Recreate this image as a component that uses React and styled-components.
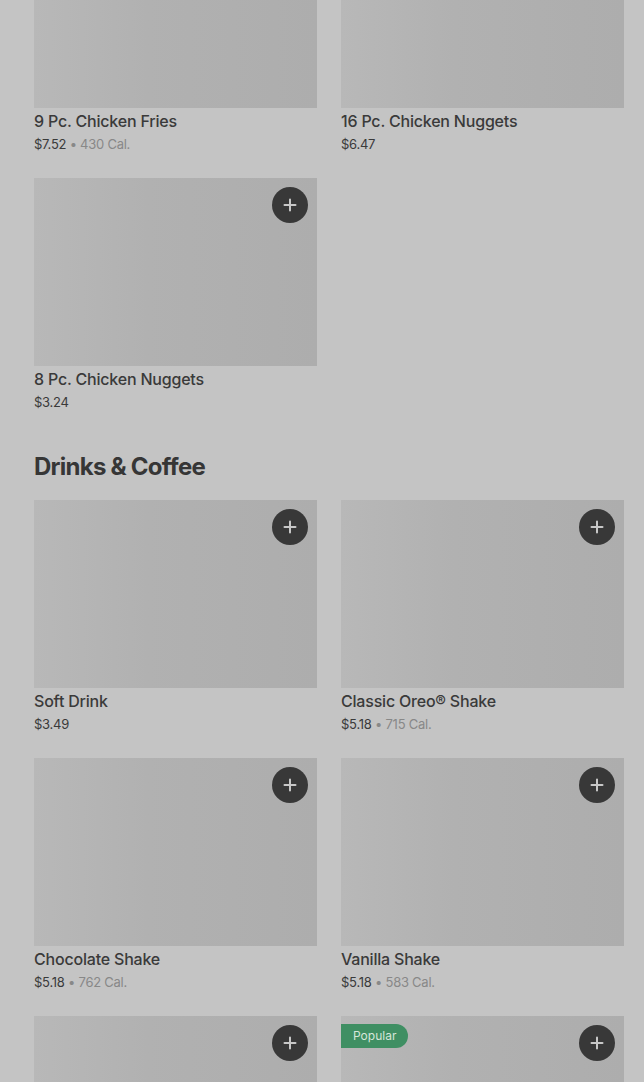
import React from "react";
import styled, { createGlobalStyle } from "styled-components";

const Global = createGlobalStyle`
  html, body { margin: 0; padding: 0; background: #c4c4c4; overflow: hidden; }
  body { font-family: Inter, "Noto Sans", Roboto, sans-serif; color: #3a3a3a; }
`;

const Page = styled.div`
  padding: 0 20px 0 34px;
  margin-top: -80px;
`;

const Section = styled.section`
  & + & { margin-top: 39px; }
`;

const Heading = styled.h2`
  margin: 0 0 17px;
  font-size: 24px;
  line-height: 32px;
  font-weight: 700;
  letter-spacing: -0.75px;
  color: #363636;
`;

const Grid = styled.div`
  display: grid;
  grid-template-columns: 283px 283px;
  column-gap: 24px;
  row-gap: 24px;
`;

const Card = styled.div`
  display: flex;
  flex-direction: column;
`;

const Image = styled.div`
  position: relative;
  height: 188px;
  background: linear-gradient(90deg, #b8b8b8 0%, #b1b1b1 40%, #adadad 100%);
`;

const AddButton = styled.div`
  position: absolute;
  top: 9px;
  right: 9px;
  width: 36px;
  height: 36px;
  border-radius: 50%;
  background: #383838;
  display: flex;
  align-items: center;
  justify-content: center;
`;

const Badge = styled.div`
  position: absolute;
  top: 8px;
  left: 0;
  height: 24px;
  padding: 0 12px;
  border-radius: 0 12px 12px 0;
  background: #3f8f63;
  color: #d6e6da;
  font-size: 12px;
  line-height: 24px;
  font-weight: 400;
`;

const Title = styled.div`
  margin-top: 3px;
  font-size: 16px;
  line-height: 20px;
  font-weight: 500;
  letter-spacing: -0.2px;
  color: #3a3a3a;
`;

const Meta = styled.div`
  margin-top: 3px;
  font-size: 13px;
  line-height: 20px;
  color: #3a3a3a;
  letter-spacing: -0.25px;
`;

const Cal = styled.span`
  color: #888888;
`;

const Plus = () => (
  <svg width="14" height="14" viewBox="0 0 14 14">
    <path d="M7 1.5v11M1.5 7h11" stroke="#c8c8c8" strokeWidth="2" strokeLinecap="round" />
  </svg>
);

const Item = ({ name, price, cal, add = true, popular }) => (
  <Card>
    <Image>
      {popular && <Badge>Popular</Badge>}
      {add && (
        <AddButton>
          <Plus />
        </AddButton>
      )}
    </Image>
    {name && <Title>{name}</Title>}
    {price && (
      <Meta>
        {price}
        {cal && <Cal> • {cal}</Cal>}
      </Meta>
    )}
  </Card>
);

export default function App() {
  return (
    <>
      <Global />
      <Page>
        <Section>
          <Grid>
            <Item name="9 Pc. Chicken Fries" price="$7.52" cal="430 Cal." add={false} />
            <Item name="16 Pc. Chicken Nuggets" price="$6.47" add={false} />
            <Item name="8 Pc. Chicken Nuggets" price="$3.24" />
          </Grid>
        </Section>
        <Section>
          <Heading>Drinks &amp; Coffee</Heading>
          <Grid>
            <Item name="Soft Drink" price="$3.49" />
            <Item name="Classic Oreo® Shake" price="$5.18" cal="715 Cal." />
            <Item name="Chocolate Shake" price="$5.18" cal="762 Cal." />
            <Item name="Vanilla Shake" price="$5.18" cal="583 Cal." />
            <Item />
            <Item popular />
          </Grid>
        </Section>
      </Page>
    </>
  );
}
